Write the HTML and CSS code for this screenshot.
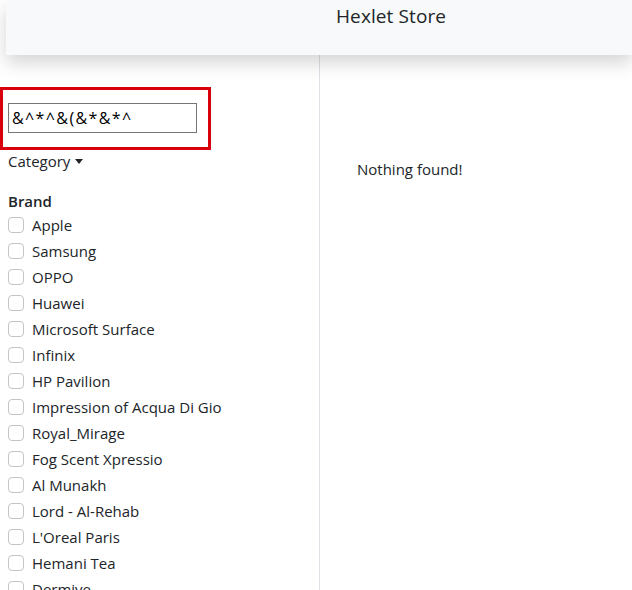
FILE: index.html
```html
<!DOCTYPE html>
<html lang="en">
<head>
<meta charset="utf-8">
<title>Hexlet Store</title>
<link rel="stylesheet" href="styles.css">
</head>
<body>
<header class="navbar">
  <span class="brand-title">Hexlet Store</span>
</header>
<main class="layout">
  <aside class="sidebar">
    <div class="highlight">
      <input class="search" type="text" value="&amp;^*^&amp;(&amp;*&amp;*^">
    </div>
    <div class="category">Category <span class="caret"></span></div>
    <div class="brand-heading">Brand</div>
    <ul class="brand-list">
      <li class="brand-item"><span class="check"></span>Apple</li>
      <li class="brand-item"><span class="check"></span>Samsung</li>
      <li class="brand-item"><span class="check"></span>OPPO</li>
      <li class="brand-item"><span class="check"></span>Huawei</li>
      <li class="brand-item"><span class="check"></span>Microsoft Surface</li>
      <li class="brand-item"><span class="check"></span>Infinix</li>
      <li class="brand-item"><span class="check"></span>HP Pavilion</li>
      <li class="brand-item"><span class="check"></span>Impression of Acqua Di Gio</li>
      <li class="brand-item"><span class="check"></span>Royal_Mirage</li>
      <li class="brand-item"><span class="check"></span>Fog Scent Xpressio</li>
      <li class="brand-item"><span class="check"></span>Al Munakh</li>
      <li class="brand-item"><span class="check"></span>Lord - Al-Rehab</li>
      <li class="brand-item"><span class="check"></span>L'Oreal Paris</li>
      <li class="brand-item"><span class="check"></span>Hemani Tea</li>
      <li class="brand-item"><span class="check"></span>Dermive</li>
    </ul>
  </aside>
  <section class="content">
    <p class="empty">Nothing found!</p>
  </section>
</main>
</body>
</html>
```
FILE: styles.css
```css
html, body {
  margin: 0;
  padding: 0;
  height: 100%;
  overflow: hidden;
  background: #fff;
}
body {
  font-family: "Open Sans", "Noto Sans", sans-serif;
  font-size: 15px;
  color: #212529;
}
.navbar {
  position: relative;
  z-index: 1;
  margin-left: 6px;
  height: 55px;
  background: #f8f9fa;
  box-shadow: 0 8px 18px rgba(0, 0, 0, 0.17);
  display: flex;
  align-items: center;
  padding-left: 330px;
  box-sizing: border-box;
}
.brand-title {
  font-size: 19px;
  font-weight: 500;
  margin-top: -23px;
  letter-spacing: 0.1px;
}
.layout {
  display: grid;
  grid-template-columns: 320px 1fr;
  height: calc(100% - 55px);
}
.sidebar {
  border-right: 1px solid #dee2e6;
  padding-top: 32px;
}
.highlight {
  width: 200px;
  border: 3px solid #d9000d;
  padding: 13px 0 14px 5px;
}
.search {
  display: block;
  box-sizing: border-box;
  width: 189px;
  height: 30px;
  border: 1px solid #767676;
  border-radius: 0;
  padding: 1px 3px;
  font-family: inherit;
  font-size: 16px;
  letter-spacing: 1.4px;
  color: #000;
  margin: 0;
}
.category {
  padding-left: 8px;
  line-height: 24px;
  margin-top: -1px;
}
.caret {
  display: inline-block;
  vertical-align: 3px;
  border-top: 5px solid #212529;
  border-left: 4px solid transparent;
  border-right: 4px solid transparent;
  margin-left: 1px;
}
.brand-heading {
  padding-left: 8px;
  line-height: 24px;
  font-weight: 600;
  margin-top: 16px;
}
.brand-list {
  list-style: none;
  margin: -1px 0 0;
  padding: 0 0 0 8px;
}
.brand-item {
  display: flex;
  align-items: center;
  height: 26px;
}
.check {
  width: 16px;
  height: 16px;
  box-sizing: border-box;
  border: 1px solid #c4c4c4;
  border-radius: 4px;
  margin-right: 8px;
  flex: none;
}
.content {
  padding-left: 37px;
}
.empty {
  margin: 0;
  margin-top: 102px;
  line-height: 24px;
}
```
